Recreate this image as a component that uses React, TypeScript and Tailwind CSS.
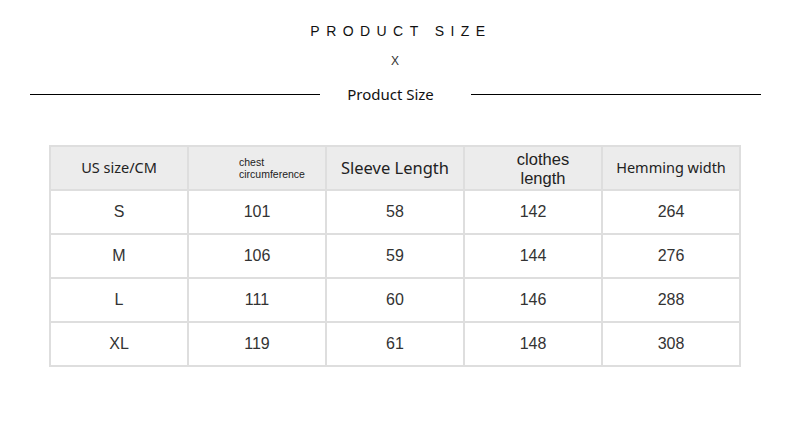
import React from "react";

const rows = [
  ["S", "101", "58", "142", "264"],
  ["M", "106", "59", "144", "276"],
  ["L", "111", "60", "146", "288"],
  ["XL", "119", "61", "148", "308"],
];

export default function App() {
  const cell = "border-2 border-[#dedede] w-[138px] h-[44px] p-0 text-center align-middle";
  return (
    <div className="w-[790px] h-[436px] bg-white text-[#222] overflow-hidden" style={{ fontFamily: '"Liberation Sans", Arial, sans-serif' }}>
      <div className="pt-[23px] flex justify-center">
        <div className="text-[14px] leading-[16px] tracking-[0.46em] pl-[12px] text-[#111]">PRODUCT SIZE</div>
      </div>
      <div className="mt-[15px] flex justify-center text-[12px] leading-[14px] text-[#333]">X</div>
      <div className="mt-[17px] flex items-center h-[18px]">
        <div className="ml-[30px] w-[290px] h-px bg-black" />
        <div className="w-[151px] text-center text-[15px] text-[#111] pr-[10px]" style={{ fontFamily: '"Noto Sans", sans-serif' }}>Product Size</div>
        <div className="w-[290px] h-px bg-black" />
      </div>
      <div className="mt-[42px] ml-[49px]">
        <table className="border-collapse" style={{ fontFamily: '"Noto Sans", sans-serif' }}>
          <thead>
            <tr className="bg-[#ececec] text-[#222]">
              <th className={`${cell} font-normal text-[14.5px]`}>US size/CM</th>
              <th className={`${cell} font-normal`}>
                <div className="text-left pl-[50px] text-[10.5px]" style={{ fontFamily: '"Liberation Sans", Arial, sans-serif' }}>
                  <div className="leading-[12px]">chest</div>
                  <div className="leading-[12px]">circumference</div>
                </div>
              </th>
              <th className={`${cell} font-normal text-[16.5px]`}>Sleeve Length</th>
              <th className={`${cell} font-normal`}>
                <div className="text-[16.5px] pl-[20px] pt-[1px]" style={{ fontFamily: '"Liberation Sans", Arial, sans-serif' }}>
                  <div className="leading-[19px]">clothes</div>
                  <div className="leading-[19px]">length</div>
                </div>
              </th>
              <th className={`${cell} font-normal text-[14.5px]`}>Hemming width</th>
            </tr>
          </thead>
          <tbody style={{ fontFamily: '"Liberation Sans", Arial, sans-serif' }}>
            {rows.map((r) => (
              <tr key={r[0]}>
                {r.map((v, i) => (
                  <td key={i} className={`${cell} text-[16px] text-[#333]`}>{v}</td>
                ))}
              </tr>
            ))}
          </tbody>
        </table>
      </div>
    </div>
  );
}
